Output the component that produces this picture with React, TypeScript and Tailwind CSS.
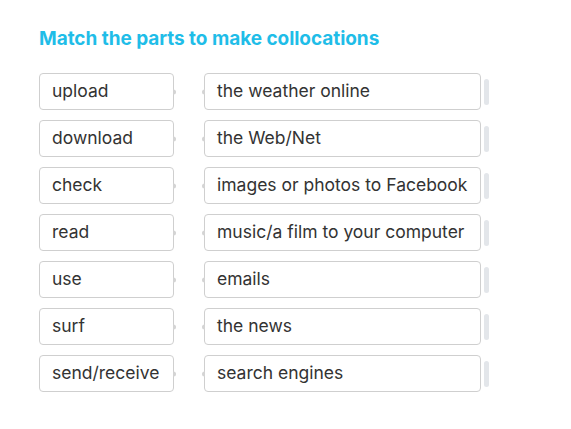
const rows: [string, string][] = [
  ["upload", "the weather online"],
  ["download", "the Web/Net"],
  ["check", "images or photos to Facebook"],
  ["read", "music/a film to your computer"],
  ["use", "emails"],
  ["surf", "the news"],
  ["send/receive", "search engines"],
]

export default function App() {
  return (
    <div className="min-h-screen bg-white pl-[39px] pt-[27px] font-['Inter',sans-serif]">
      <h1 className="text-[19px] font-bold leading-[24px] tracking-[-0.05px] text-[#1fbde8]">
        Match the parts to make collocations
      </h1>
      <div className="mt-[22px] flex flex-col gap-[10px]">
        {rows.map(([left, right]) => (
          <div key={left} className="flex items-center">
            <div className="relative flex h-[37px] w-[135px] items-center rounded-[4px] border border-[#cfcfcf] px-[12px] text-[17.5px] text-[#333]">
              {left}
              <span className="absolute right-[-3px] top-1/2 h-[5px] w-[3px] -translate-y-1/2 rounded-r-full bg-[#d4d4d4]" />
            </div>
            <div className="relative ml-[30px] flex h-[37px] w-[277px] items-center rounded-[4px] border border-[#cfcfcf] px-[12px] text-[17.5px] text-[#333]">
              {right}
              <span className="absolute left-[-3px] top-1/2 h-[5px] w-[3px] -translate-y-1/2 rounded-l-full bg-[#d4d4d4]" />
            </div>
            <div className="ml-[3px] h-[26px] w-[5px] rounded-[3px] bg-[#e3e6ea]" />
          </div>
        ))}
      </div>
    </div>
  )
}
